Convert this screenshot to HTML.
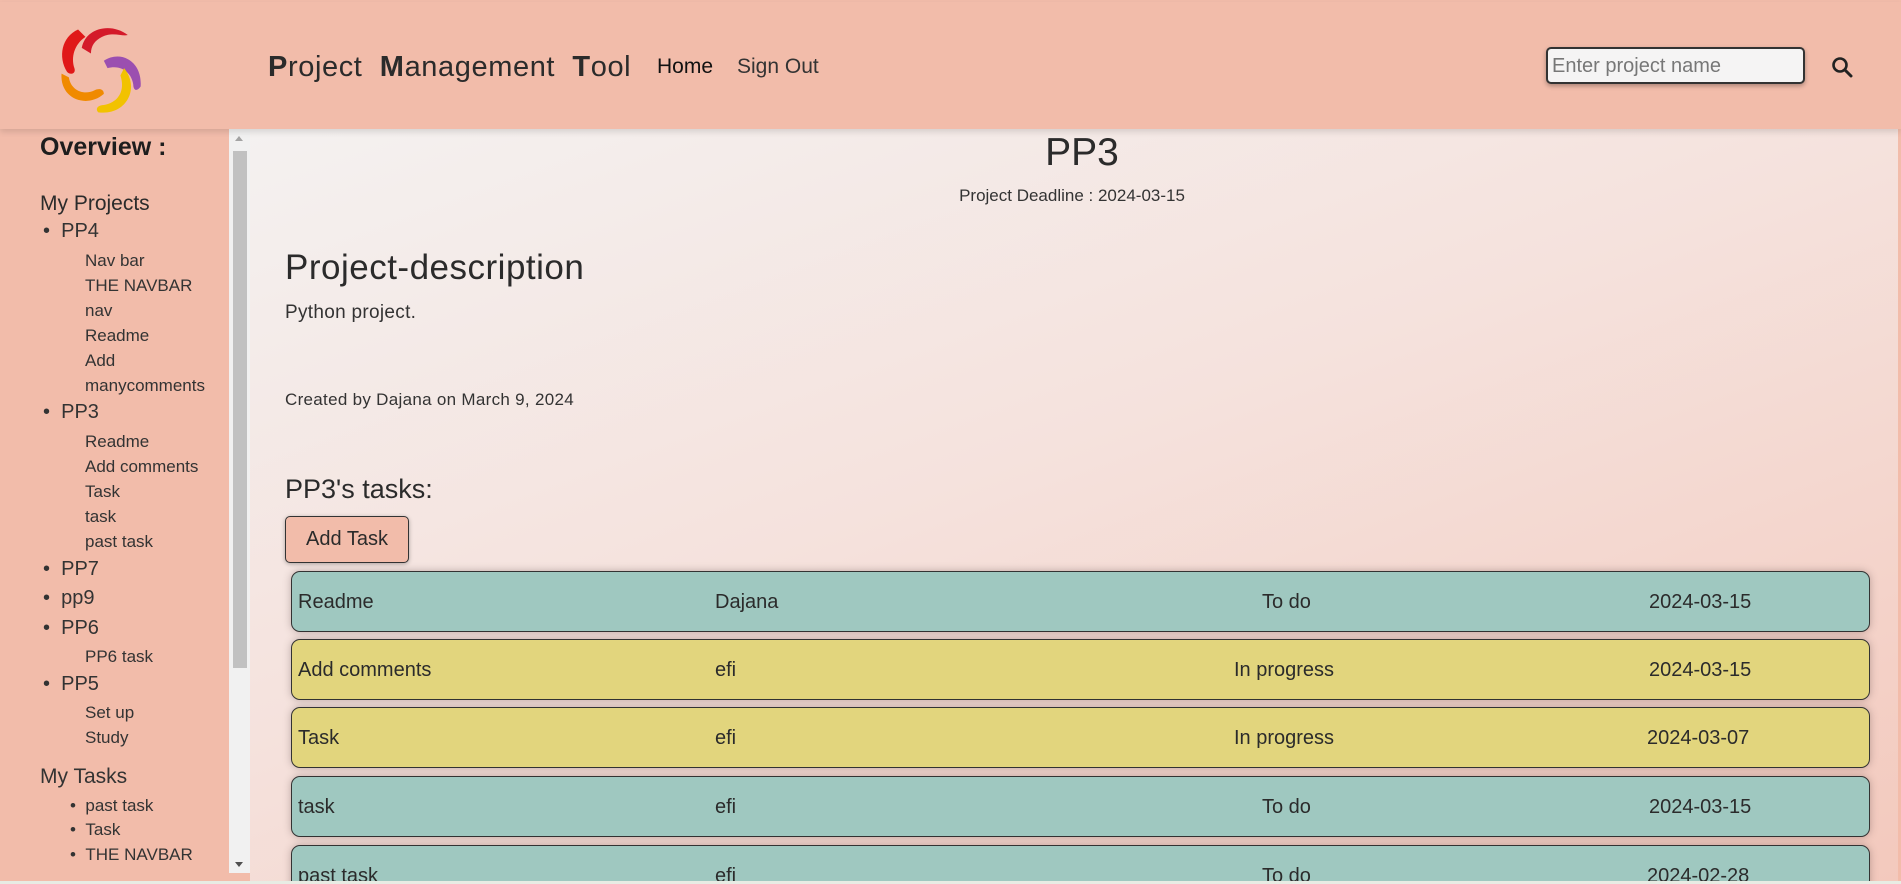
<!DOCTYPE html>
<html><head><meta charset="utf-8">
<style>
*{box-sizing:border-box;margin:0;padding:0}
body{width:1901px;height:884px;overflow:hidden;background:#f2bcaa;font-family:"Liberation Sans",sans-serif;color:#2b2b2b;position:relative}
.hdr{position:absolute;left:0;top:2px;width:1901px;height:127px;background:#f2bcaa;box-shadow:0 3px 6px rgba(0,0,0,0.12);z-index:2}
.abs{position:absolute;white-space:nowrap}
.side{position:absolute;left:0;top:129px;width:229px;height:752px;background:#f2bcaa}
.sb{position:absolute;left:229px;top:129px;width:21px;height:744px;background:#f1f1f1}
.main{position:absolute;left:250px;top:129px;width:1648px;height:752px;background:linear-gradient(160deg,#f4f1f0 0%,#f5e2dd 45%,#f3c9bd 100%);overflow:hidden}
.row{position:absolute;left:41px;width:1579px;height:61px;border:1px solid #333;border-radius:9px;box-shadow:0 0 8px rgba(80,60,60,0.35);font-size:20px}
.row span{position:absolute;top:19px;white-space:nowrap}
.t{background:#9fc8c0}.y{background:#e2d57d}
</style></head><body>
<div class="hdr">
<svg style="position:absolute;left:56px;top:22px" width="92" height="92" viewBox="0 0 100 100">
<path d="M24 6 C6 14 2 36 12 52 C16 56 22 54 20 48 C16 36 20 22 32 14 Z" fill="#e01818"/>
<path d="M28 26 C32 4 60 -2 78 12 C72 14 62 8 50 14 C42 18 38 24 38 32 Z" fill="#d41a2a"/>
<path d="M52 40 C70 28 94 40 92 68 C88 74 84 72 84 66 C82 52 70 44 56 48 Z" fill="#9b4fb0"/>
<path d="M74 48 C92 70 76 100 46 96 C42 92 46 88 52 88 C66 86 76 74 70 56 Z" fill="#f2c200"/>
<path d="M6 54 C4 82 34 92 52 76 C52 70 46 70 42 72 C30 78 16 72 14 58 Z" fill="#f08a00"/>
</svg>
<div class="abs" style="left:268px;top:49px;font-size:29px;letter-spacing:0.6px"><b>P</b>roject&nbsp; <b>M</b>anagement&nbsp; <b>T</b>ool</div>
<div class="abs" style="left:657px;top:53px;font-size:21px;color:#111">Home</div>
<div class="abs" style="left:737px;top:53px;font-size:21px;color:#333">Sign Out</div>
<div class="abs" style="left:1546px;top:45px;width:259px;height:37px;background:#f5f4f4;border:2px solid #333;border-radius:5px;box-shadow:0 2px 5px rgba(0,0,0,0.3);font-size:20px;color:#777;padding:6px 4px">Enter project name</div>
<svg style="position:absolute;left:1831px;top:54px" width="22" height="22" viewBox="0 0 22 22"><circle cx="9" cy="9" r="6.5" fill="none" stroke="#222" stroke-width="2.6"/><path d="M14 14 L20 20" stroke="#222" stroke-width="3" stroke-linecap="round"/></svg>
</div>
<div class="side">
<div class="abs" style="left:40px;top:4px;font-size:25px;font-weight:bold;color:#1e1e1e">Overview :</div>
<div class="abs" style="left:40px;top:63px;font-size:21px">My Projects</div>
<div style="position:absolute;left:0;top:0;font-size:17px;color:#333">
<div class="abs" style="left:43px;top:91px;font-size:20px">•&nbsp;&nbsp;PP4</div>
<div class="abs" style="left:85px;top:122px">Nav bar</div>
<div class="abs" style="left:85px;top:147px">THE NAVBAR</div>
<div class="abs" style="left:85px;top:172px">nav</div>
<div class="abs" style="left:85px;top:197px">Readme</div>
<div class="abs" style="left:85px;top:222px">Add</div>
<div class="abs" style="left:85px;top:247px">manycomments</div>
<div class="abs" style="left:43px;top:272px;font-size:20px">•&nbsp;&nbsp;PP3</div>
<div class="abs" style="left:85px;top:303px">Readme</div>
<div class="abs" style="left:85px;top:328px">Add comments</div>
<div class="abs" style="left:85px;top:353px">Task</div>
<div class="abs" style="left:85px;top:378px">task</div>
<div class="abs" style="left:85px;top:403px">past task</div>
<div class="abs" style="left:43px;top:429px;font-size:20px">•&nbsp;&nbsp;PP7</div>
<div class="abs" style="left:43px;top:458px;font-size:20px">•&nbsp;&nbsp;pp9</div>
<div class="abs" style="left:43px;top:488px;font-size:20px">•&nbsp;&nbsp;PP6</div>
<div class="abs" style="left:85px;top:518px">PP6 task</div>
<div class="abs" style="left:43px;top:544px;font-size:20px">•&nbsp;&nbsp;PP5</div>
<div class="abs" style="left:85px;top:574px">Set up</div>
<div class="abs" style="left:85px;top:599px">Study</div>
<div class="abs" style="left:40px;top:636px;font-size:21px">My Tasks</div>
<div class="abs" style="left:70px;top:667px">•&nbsp;&nbsp;past task</div>
<div class="abs" style="left:70px;top:691px">•&nbsp;&nbsp;Task</div>
<div class="abs" style="left:70px;top:716px">•&nbsp;&nbsp;THE NAVBAR</div>
</div>
</div>
<div class="sb">
<div style="position:absolute;left:4px;top:22px;width:14px;height:517px;background:#c1c1c1"></div>
<div style="position:absolute;left:6px;top:7px;border:4px solid transparent;border-bottom:5px solid #a3a3a3;border-top:0"></div>
<div style="position:absolute;left:6px;top:733px;border:4px solid transparent;border-top:5px solid #505050;border-bottom:0"></div>
</div>
<div class="main">
<div class="abs" style="width:1648px;text-align:center;top:2px;font-size:39px;color:#2b2b2b;left:8px">PP3</div>
<div class="abs" style="width:1648px;text-align:center;top:57px;font-size:17px;color:#333;left:-2px">Project Deadline : 2024-03-15</div>
<div class="abs" style="left:35px;top:119px;font-size:35px;color:#2b2b2b;letter-spacing:0.5px">Project-description</div>
<div class="abs" style="left:35px;top:173px;font-size:19px;color:#333;letter-spacing:0.3px">Python project.</div>
<div class="abs" style="left:35px;top:261px;font-size:17px;color:#333;letter-spacing:0.3px">Created by Dajana on March 9, 2024</div>
<div class="abs" style="left:35px;top:345px;font-size:27px;color:#2b2b2b">PP3's tasks:</div>
<div class="abs" style="left:35px;top:387px;width:124px;height:47px;background:#f2bcaa;border:1px solid #333;border-radius:5px;box-shadow:0 1px 4px rgba(0,0,0,0.3);font-size:20px;text-align:center;line-height:45px">Add Task</div>
<div class="row t" style="top:442px"><span style="left:6px">Readme</span><span style="left:423px">Dajana</span><span style="left:970px">To do</span><span style="left:1357px">2024-03-15</span></div>
<div class="row y" style="top:510px"><span style="left:6px">Add comments</span><span style="left:423px">efi</span><span style="left:942px">In progress</span><span style="left:1357px">2024-03-15</span></div>
<div class="row y" style="top:578px"><span style="left:6px">Task</span><span style="left:423px">efi</span><span style="left:942px">In progress</span><span style="left:1355px">2024-03-07</span></div>
<div class="row t" style="top:647px"><span style="left:6px">task</span><span style="left:423px">efi</span><span style="left:970px">To do</span><span style="left:1357px">2024-03-15</span></div>
<div class="row t" style="top:716px"><span style="left:6px">past task</span><span style="left:423px">efi</span><span style="left:970px">To do</span><span style="left:1355px">2024-02-28</span></div>
</div>
<div style="position:absolute;left:0;top:881px;width:1901px;height:3px;background:#e8ece4"></div>
</body></html>
